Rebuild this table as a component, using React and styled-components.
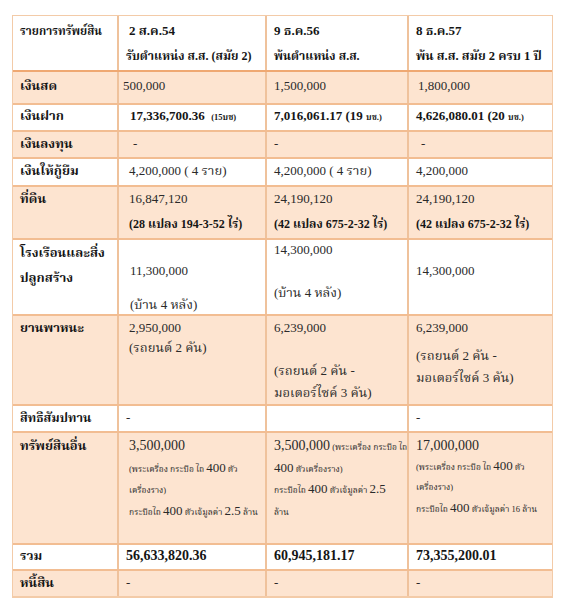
import React from "react";
import styled, { createGlobalStyle } from "styled-components";

const GlobalStyle = createGlobalStyle`
  html, body {
    margin: 0;
    padding: 0;
    background: #ffffff;
  }
  body {
    font-family: "Liberation Serif", "Noto Serif Thai", "Noto Sans Thai", "Loma", "Garuda", "Norasi", serif;
    color: #1d1d1d;
  }
`;

const Page = styled.div`
  width: 562px;
  height: 606px;
  padding: 15px 0 0 12px;
  box-sizing: border-box;
`;

const Table = styled.div`
  width: 541px;
  border: 1px solid #f3cba8;
  border-bottom-width: 2px;
  box-sizing: border-box;
`;

const Row = styled.div`
  display: grid;
  grid-template-columns: 104px 148px 142px 145px;
  height: ${(p) => p.$h}px;
  box-sizing: border-box;
  background: ${(p) => (p.$shade ? "#fde4d0" : "#ffffff")};
  border-top: ${(p) => (p.$first ? "none" : `2px solid ${p.$strong ? "#efa872" : "#f2bd92"}`)};
`;

const Cell = styled.div`
  box-sizing: border-box;
  padding: ${(p) => p.$pt || 0}px 2px 0 ${(p) => p.$pl ?? 7}px;
  border-left: ${(p) => (p.$first ? "none" : "2px solid #efc29c")};
  overflow: hidden;
`;

const Line = styled.div`
  line-height: 20px;
  height: 20px;
  white-space: nowrap;
  margin-top: ${(p) => p.$mt || 0}px;
  padding-left: ${(p) => p.$in || 0}px;
  font-size: ${(p) => p.$size || 13}px;
  font-weight: ${(p) => (p.$bold ? 700 : 400)};
  color: ${(p) => (p.$bold ? "#151515" : "#2a2a2a")};
`;

const Label = styled(Line)`
  font-size: ${(p) => p.$size || 13}px;
  font-weight: 700;
  color: #151515;
`;

const Small = styled.span`
  font-size: 8.5px;
  font-weight: 400;
`;

const Unit = styled.span`
  font-size: 8.5px;
`;

const Big = styled.span`
  font-size: 13px;
`;

const Dash = () => <Line>-</Line>;

export default function App() {
  return (
    <Page>
      <GlobalStyle />
      <Table>
        <Row $h={54} $first>
          <Cell $first $pt={5}>
            <Label $size={11.5}>รายการทรัพย์สิน</Label>
          </Cell>
          <Cell $pt={5}>
            <Line $bold $in={3}>2 ส.ค.54</Line>
            <Line $bold $mt={5} $size={12}>รับตำแหน่ง ส.ส. (สมัย 2)</Line>
          </Cell>
          <Cell $pt={5}>
            <Line $bold>9 ธ.ค.56</Line>
            <Line $bold $mt={5} $size={12}>พ้นตำแหน่ง ส.ส.</Line>
          </Cell>
          <Cell $pt={5}>
            <Line $bold>8 ธ.ค.57</Line>
            <Line $bold $mt={5} $size={12.5}>พ้น ส.ส. สมัย 2 ครบ 1 ปี</Line>
          </Cell>
        </Row>

        <Row $h={33} $shade $strong>
          <Cell $first $pt={4}><Label>เงินสด</Label></Cell>
          <Cell $pt={4} $pl={4}><Line>500,000</Line></Cell>
          <Cell $pt={4}><Line>1,500,000</Line></Cell>
          <Cell $pt={4} $pl={9}><Line>1,800,000</Line></Cell>
        </Row>

        <Row $h={27}>
          <Cell $first $pt={1}><Label>เงินฝาก</Label></Cell>
          <Cell $pt={1} $pl={11}>
            <Line $bold>17,336,700.36 &nbsp;<Unit>(15บช)</Unit></Line>
          </Cell>
          <Cell $pt={1}>
            <Line $bold>7,016,061.17 (19 <Unit>บช.)</Unit></Line>
          </Cell>
          <Cell $pt={1}>
            <Line $bold>4,626,080.01 (20 <Unit>บช.)</Unit></Line>
          </Cell>
        </Row>

        <Row $h={27} $shade>
          <Cell $first $pt={2}><Label>เงินลงทุน</Label></Cell>
          <Cell $pt={2} $pl={14}><Dash /></Cell>
          <Cell $pt={2}><Dash /></Cell>
          <Cell $pt={2} $pl={12}><Dash /></Cell>
        </Row>

        <Row $h={28}>
          <Cell $first $pt={2}><Label>เงินให้กู้ยืม</Label></Cell>
          <Cell $pt={2} $pl={10}><Line>4,200,000 ( 4 ราย)</Line></Cell>
          <Cell $pt={2}><Line>4,200,000 ( 4 ราย)</Line></Cell>
          <Cell $pt={2}><Line>4,200,000</Line></Cell>
        </Row>

        <Row $h={53} $shade>
          <Cell $first $pt={2}><Label>ที่ดิน</Label></Cell>
          <Cell $pt={2} $pl={10}>
            <Line>16,847,120</Line>
            <Line $bold $mt={5} $in={-3} $size={12}>(28 แปลง 194-3-52 ไร่)</Line>
          </Cell>
          <Cell $pt={2}>
            <Line>24,190,120</Line>
            <Line $bold $mt={5} $size={12}>(42 แปลง 675-2-32 ไร่)</Line>
          </Cell>
          <Cell $pt={2}>
            <Line>24,190,120</Line>
            <Line $bold $mt={5} $size={12}>(42 แปลง 675-2-32 ไร่)</Line>
          </Cell>
        </Row>

        <Row $h={76}>
          <Cell $first $pt={3}>
            <Label>โรงเรือนและสิ่ง</Label>
            <Label $mt={5}>ปลูกสร้าง</Label>
          </Cell>
          <Cell $pt={21} $pl={11}>
            <Line>11,300,000</Line>
            <Line $mt={14} $in={-4}>(บ้าน 4 หลัง)</Line>
          </Cell>
          <Cell $pt={0}>
            <Line>14,300,000</Line>
            <Line $mt={23}>(บ้าน 4 หลัง)</Line>
          </Cell>
          <Cell $pt={21}>
            <Line>14,300,000</Line>
          </Cell>
        </Row>

        <Row $h={90} $shade>
          <Cell $first $pt={2}><Label>ยานพาหนะ</Label></Cell>
          <Cell $pt={2} $pl={10}>
            <Line>2,950,000</Line>
            <Line $in={-3}>(รถยนต์ 2 คัน)</Line>
          </Cell>
          <Cell $pt={2}>
            <Line>6,239,000</Line>
            <Line $mt={23}>(รถยนต์ 2 คัน -</Line>
            <Line $mt={2}>มอเตอร์ไซค์ 3 คัน)</Line>
          </Cell>
          <Cell $pt={2}>
            <Line>6,239,000</Line>
            <Line $mt={8}>(รถยนต์ 2 คัน -</Line>
            <Line $mt={2}>มอเตอร์ไซค์ 3 คัน)</Line>
          </Cell>
        </Row>

        <Row $h={27}>
          <Cell $first $pt={2}><Label $size={12.5}>สิทธิสัมปทาน</Label></Cell>
          <Cell $pt={2}><Dash /></Cell>
          <Cell $pt={2} />
          <Cell $pt={2}><Dash /></Cell>
        </Row>

        <Row $h={112} $shade>
          <Cell $first $pt={3}><Label>ทรัพย์สินอื่น</Label></Cell>
          <Cell $pt={3} $pl={10}>
            <Line $size={14}>3,500,000</Line>
            <Line $mt={2}><Small>(พระเครื่อง กระบือ ไถ </Small><Big>400</Big><Small> ตัว</Small></Line>
            <Line $mt={1}><Small>เครื่องราง)</Small></Line>
            <Line $mt={2}><Small>กระบือไถ </Small><Big>400</Big><Small> ตัวเจ้มูลค่า </Small><Big>2.5</Big><Small> ล้าน</Small></Line>
          </Cell>
          <Cell $pt={3}>
            <Line $size={14}>3,500,000<Small> (พระเครื่อง กระบือ ไถ</Small></Line>
            <Line $mt={2}><Big>400</Big><Small> ตัวเครื่องราง)</Small></Line>
            <Line $mt={1}><Small>กระบือไถ </Small><Big>400</Big><Small> ตัวเจ้มูลค่า </Small><Big>2.5</Big></Line>
            <Line $mt={2}><Small>ล้าน</Small></Line>
          </Cell>
          <Cell $pt={3}>
            <Line $size={14}>17,000,000</Line>
            <Line><Small>(พระเครื่อง กระบือ ไถ </Small><Big>400</Big><Small> ตัว</Small></Line>
            <Line><Small>เครื่องราง)</Small></Line>
            <Line $mt={2}><Small>กระบือไถ </Small><Big>400</Big><Small> ตัวเจ้มูลค่า 16 ล้าน</Small></Line>
          </Cell>
        </Row>

        <Row $h={26}>
          <Cell $first $pt={1}><Label>รวม</Label></Cell>
          <Cell $pt={1}><Line $bold $size={14}>56,633,820.36</Line></Cell>
          <Cell $pt={1}><Line $bold $size={14}>60,945,181.17</Line></Cell>
          <Cell $pt={1}><Line $bold $size={14}>73,355,200.01</Line></Cell>
        </Row>

        <Row $h={27} $shade>
          <Cell $first $pt={2}><Label>หนี้สิน</Label></Cell>
          <Cell $pt={2}><Dash /></Cell>
          <Cell $pt={2}><Dash /></Cell>
          <Cell $pt={2}><Dash /></Cell>
        </Row>
      </Table>
    </Page>
  );
}
